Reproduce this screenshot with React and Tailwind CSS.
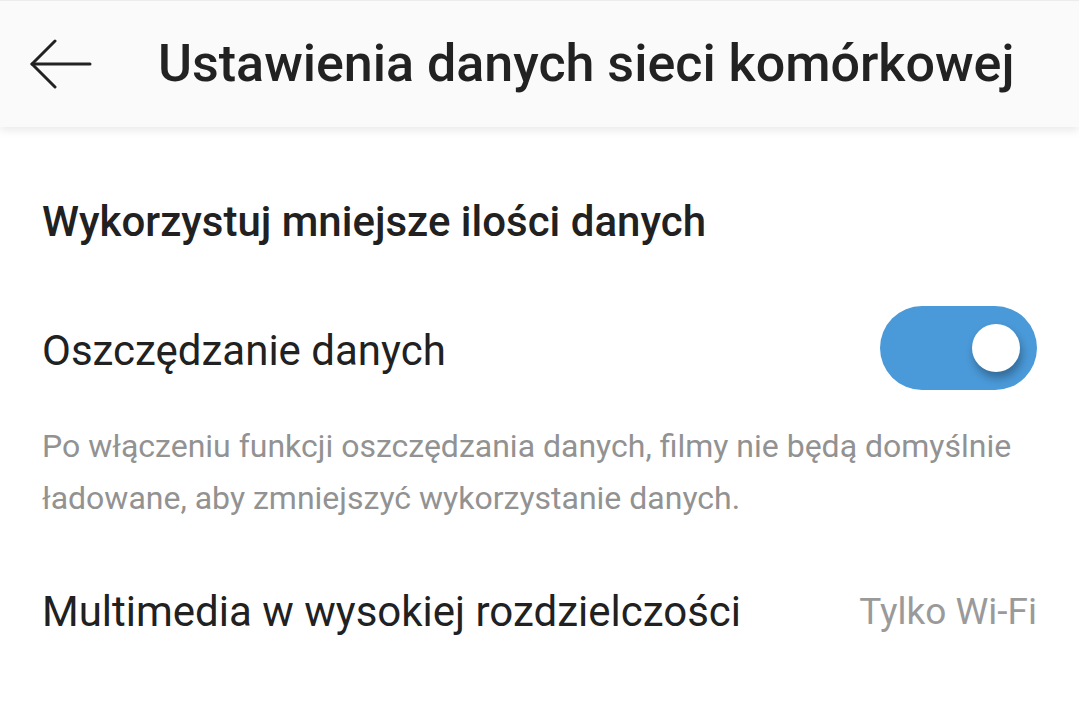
const Toggle = ({ on }) => (
    <div className={`w-[157px] h-[84px] rounded-full flex items-center px-[17px] ${on ? 'bg-[#4a99d8] justify-end' : 'bg-gray-300 justify-start'}`}>
        <div className="w-[48px] h-[48px] rounded-full bg-white shadow-[2px_6px_8px_rgba(0,0,0,0.3)]" />
    </div>
);

const BackArrow = () => (
    <svg width="64" height="50" viewBox="0 0 64 50" fill="none" stroke="currentColor" strokeWidth="3" strokeLinecap="round" strokeLinejoin="round">
        <path d="M25 2 2 25l23 23" />
        <path d="M2 25h58" />
    </svg>
);

const App = () => {
    return (
        <div className="min-h-screen bg-white font-['Roboto',sans-serif] text-[#212121]">
            {/* Top bar */}
            <div className="h-[127px] bg-[#fafafa] border-t border-[#ececec] flex items-center shadow-[0_4px_8px_rgba(0,0,0,0.08)] relative">
                <button className="w-[158px] pl-[30px] h-full flex items-center text-[#222]">
                    <BackArrow />
                </button>
                <h1 className="text-[52px] font-medium text-[#222] leading-none">
                    Ustawienia danych sieci komórkowej
                </h1>
            </div>

            <div className="px-[42px]">
                <h2 className="pt-[69px] text-[42px] font-medium leading-[52px]">
                    Wykorzystuj mniejsze ilości danych
                </h2>

                <div className="mt-[58px] flex items-center justify-between">
                    <span className="pt-[6px] text-[42px] leading-[52px]">Oszczędzanie danych</span>
                    <Toggle on />
                </div>

                <p className="mt-[30px] text-[32px] leading-[52px] text-[#929292]">
                    Po włączeniu funkcji oszczędzania danych, filmy nie będą domyślnie ładowane, aby zmniejszyć wykorzystanie danych.
                </p>

                <div className="mt-[62px] flex items-center justify-between">
                    <span className="text-[42px] leading-[52px]">Multimedia w wysokiej rozdzielczości</span>
                    <span className="text-[37px] leading-[52px] text-[#9a9a9a]">Tylko Wi-Fi</span>
                </div>
            </div>
        </div>
    );
};

export default App;
